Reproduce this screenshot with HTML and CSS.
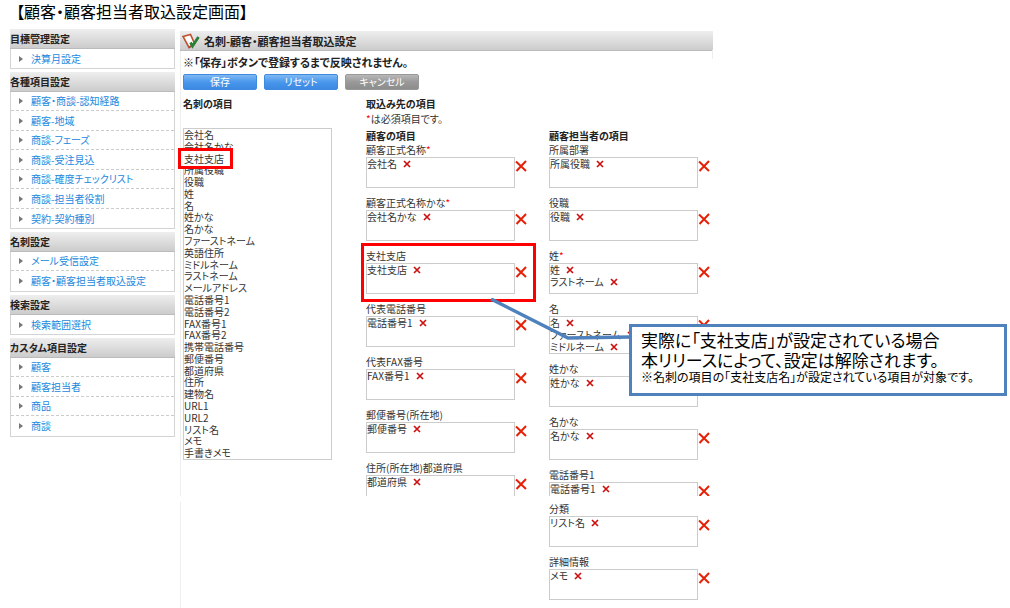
FILE: index.html
```html
<!DOCTYPE html>
<html lang="ja">
<head>
    <meta charset="UTF-8">
    <meta name="viewport" content="width=device-width, initial-scale=1.0">
    <title>顧客・顧客担当者取込設定画面</title>
    <link rel="stylesheet" href="styles.css">
</head>
<body>
    <svg class="icons">
        <symbol id="cross" viewBox="0 0 12 12">
            <path d="M1 1.5L11 11M11 1L1.5 11" fill="none" stroke="currentColor" stroke-width="2"/>
        </symbol>
        <symbol id="cross-small" viewBox="0 0 8 8">
            <path d="M1 1L7 7M7 1L1 7" fill="none" stroke="currentColor" stroke-width="1.7"/>
        </symbol>
    </svg>

    <h1>【顧客・顧客担当者取込設定画面】</h1>

    <div class="layout">
        <nav class="sidebar">
            <section>
                <h2 class="bar">目標管理設定</h2>
                <ul>
                    <li><a href="#">決算月設定</a></li>
                </ul>
            </section>
            <section>
                <h2 class="bar">各種項目設定</h2>
                <ul>
                    <li><a href="#">顧客・商談-認知経路</a></li>
                    <li><a href="#">顧客-地域</a></li>
                    <li><a href="#">商談-フェーズ</a></li>
                    <li><a href="#">商談-受注見込</a></li>
                    <li><a href="#">商談-確度チェックリスト</a></li>
                    <li><a href="#">商談-担当者役割</a></li>
                    <li><a href="#">契約-契約種別</a></li>
                </ul>
            </section>
            <section>
                <h2 class="bar">名刺設定</h2>
                <ul>
                    <li><a href="#">メール受信設定</a></li>
                    <li><a href="#">顧客・顧客担当者取込設定</a></li>
                </ul>
            </section>
            <section>
                <h2 class="bar">検索設定</h2>
                <ul>
                    <li><a href="#">検索範囲選択</a></li>
                </ul>
            </section>
            <section>
                <h2 class="bar">カスタム項目設定</h2>
                <ul>
                    <li><a href="#">顧客</a></li>
                    <li><a href="#">顧客担当者</a></li>
                    <li><a href="#">商品</a></li>
                    <li><a href="#">商談</a></li>
                </ul>
            </section>
        </nav>

        <main>
            <div class="panel">
                <h2 class="bar panel-title">
                    <svg class="panel-icon" viewBox="0 0 18 16">
                        <path d="M1 3.5L8.5 1.5L12.5 10.5L7 14.5Z" fill="#fff" stroke="#c0502f" stroke-width="1.6"/>
                        <path d="M7 15L12.5 11" fill="none" stroke="#555" stroke-width="1"/>
                        <path d="M8.5 9.5L10.5 13L16.5 4" fill="none" stroke="#2a7f35" stroke-width="2.8"/>
                    </svg>
                    名刺-顧客・顧客担当者取込設定
                </h2>
                <div class="panel-body">
                    <p class="notice">※「保存」ボタンで登録するまで反映されません。</p>
                    <div class="buttons">
                        <button type="button">保存</button>
                        <button type="button">リセット</button>
                        <button type="button" class="cancel">キャンセル</button>
                    </div>

                    <div class="columns">
                        <section class="source">
                            <h3>名刺の項目</h3>
                            <ul class="source-list">
                                <li>会社名</li>
                                <li>会社名かな</li>
                                <li class="marked"><span>支社支店</span></li>
                                <li>所属役職</li>
                                <li>役職</li>
                                <li>姓</li>
                                <li>名</li>
                                <li>姓かな</li>
                                <li>名かな</li>
                                <li>ファーストネーム</li>
                                <li>英語住所</li>
                                <li>ミドルネーム</li>
                                <li>ラストネーム</li>
                                <li>メールアドレス</li>
                                <li>電話番号1</li>
                                <li>電話番号2</li>
                                <li>FAX番号1</li>
                                <li>FAX番号2</li>
                                <li>携帯電話番号</li>
                                <li>郵便番号</li>
                                <li>都道府県</li>
                                <li>住所</li>
                                <li>建物名</li>
                                <li>URL1</li>
                                <li>URL2</li>
                                <li>リスト名</li>
                                <li>メモ</li>
                                <li>手書きメモ</li>
                            </ul>
                        </section>

                        <section class="target">
                            <h3>取込み先の項目</h3>
                            <p class="required-note"><em>*</em>は必須項目です。</p>
                            <div class="target-columns">
                                <div class="fields" id="customer">
                                    <h3>顧客の項目</h3>
                                </div>
                                <div class="fields" id="contact">
                                    <h3>顧客担当者の項目</h3>
                                </div>
                            </div>
                        </section>
                    </div>
                </div>
            </div>
            <div class="panel-rest">
                <div class="fields" id="contact-rest"></div>
            </div>
        </main>
    </div>

    <svg class="connector" viewBox="0 0 140 44">
        <path d="M1 1L78 40L140 39" fill="none" stroke="#4f81bd" stroke-width="3.5"/>
    </svg>
    <aside class="callout">
        <p>実際に「支社支店」が設定されている場合</p>
        <p>本リリースによって、設定は解除されます。</p>
        <p class="small">※名刺の項目の「支社支店名」が設定されている項目が対象です。</p>
    </aside>

    <script src="script.js"></script>
</body>
</html>
```
FILE: styles.css
```css
* {
    margin: 0;
    padding: 0;
    box-sizing: border-box;
}
body {
    position: relative;
    min-height: 100vh;
    background: white;
    color: #333;
    font-family: "Noto Sans CJK JP", sans-serif;
    font-feature-settings: "palt";
    font-size: 10px;
    line-height: 12px;
}
ul {
    list-style: none;
}
.icons {
    display: none;
}
h1 {
    height: 29px;
    padding-left: 16px;
    color: black;
    font-size: 16px;
    font-weight: normal;
    line-height: 22px;
}
.layout {
    display: flex;
    gap: 5px;
    padding-left: 10px;
}
.bar {
    height: 20px;
    background: linear-gradient(#eeeeee, #cccccc);
    border-bottom: 1px solid #bbb;
    color: #222;
    font-size: 10px;
    line-height: 20px;
}

/* sidebar */
.sidebar {
    flex: 0 0 165px;
}
.sidebar section {
    margin-bottom: 3px;
}
.sidebar ul {
    border: 1px solid #d4d4d4;
    border-top: none;
}
.sidebar li {
    display: flex;
    align-items: center;
    height: 19px;
    padding-left: 8px;
    border-bottom: 1px dashed #ccc;
}
.sidebar li:nth-child(even) {
    height: 20px;
}
.sidebar li:last-child {
    border-bottom: none;
}
.sidebar li::before {
    content: "";
    margin-right: 8px;
    border: solid transparent;
    border-width: 3px 0 3px 4px;
    border-left-color: #777;
}
.sidebar a {
    color: #2288dd;
    text-decoration: none;
}

/* main panel */
main {
    flex: 1;
    max-width: 533px;
    padding-top: 2px;
}
.panel {
    height: 465px;
    clip-path: inset(0 -10px);
}
.panel-title {
    position: relative;
    display: flex;
    align-items: center;
    gap: 4px;
    padding-left: 2px;
    font-size: 11px;
    line-height: 12px;
}
.panel-title::after {
    content: "";
    position: absolute;
    top: 100%;
    right: 0;
    height: 9px;
    border-right: 1px solid #eee;
}
.panel-icon {
    width: 18px;
    height: 16px;
}
.panel-body {
    padding: 5px 0 0 2px;
    border-left: 1px solid #eee;
}
.notice {
    margin-bottom: 6px;
    color: #222;
    font-size: 11px;
    font-weight: bold;
}
.buttons {
    display: flex;
    gap: 7px;
    margin-bottom: 8px;
}
button {
    width: 74px;
    height: 16px;
    background: linear-gradient(#7fb8f3, #4a98ec 50%, #3a88e2);
    border: 1px solid #3f8be0;
    border-radius: 2px;
    color: white;
    font: inherit;
    font-feature-settings: inherit;
    line-height: 12px;
    cursor: pointer;
}
button.cancel {
    background: linear-gradient(#b8b8b8, #999 50%, #8c8c8c);
    border-color: #999;
}
.columns {
    display: flex;
    gap: 34px;
}
h3 {
    color: #222;
    font-size: 10px;
    line-height: 12px;
}
.source {
    flex: 0 0 149px;
}
.source-list {
    display: grid;
    grid-auto-rows: 1fr;
    height: 332px;
    margin-top: 18px;
    border: 1px solid #ccc;
    line-height: 11px;
}
.marked {
    position: relative;
}
.marked span {
    position: absolute;
    top: -5px;
    left: -6px;
    width: 55px;
    padding: 2px 3px;
    background: white;
    border: 3px solid red;
}
.required-note {
    margin: 3px 0 5px;
}
em {
    color: red;
    font-style: normal;
}
.target-columns {
    display: flex;
    gap: 21px;
}
.fields {
    width: 162px;
}
.fields h3 {
    margin-bottom: 1px;
}
.field {
    position: relative;
    margin-bottom: 8px;
}
.field-label {
    height: 14px;
    padding-top: 1px;
}
.field-row {
    display: flex;
}
.field-box {
    width: 149px;
    min-height: 31px;
    border: 1px solid #ccc;
}
.field-box li {
    display: flex;
    align-items: center;
    gap: 6px;
    height: 12px;
}
.field .clear,
.field .remove {
    width: 12px;
    height: 12px;
    background: none;
    border: none;
    border-radius: 0;
}
.field .clear {
    margin-top: 3px;
    color: #e52207;
}
.field .remove {
    width: 8px;
    height: 8px;
    color: #cc1111;
}
.clear svg,
.remove svg {
    display: block;
    width: 100%;
    height: 100%;
}
.field.highlight::after {
    content: "";
    position: absolute;
    inset: -6px -8px -8px -5px;
    border: 3px solid red;
}
.panel-rest {
    display: flex;
    justify-content: flex-end;
    margin-top: 6px;
    padding-right: 2px;
    border-left: 1px solid #eee;
}

/* note over the page */
.connector {
    position: absolute;
    top: 298px;
    left: 490px;
    width: 140px;
    height: 44px;
}
.callout {
    position: absolute;
    top: 324px;
    left: 629px;
    width: 378px;
    padding: 3px 9px 9px;
    background: white;
    border: 3px solid #4f81bd;
    color: black;
    font-size: 17px;
    line-height: 20px;
    white-space: nowrap;
}
.callout .small {
    font-size: 12px;
    line-height: 14px;
}
```
FILE: script.js
```js
const customerFields = [
    { label: '顧客正式名称', required: true, items: ['会社名'] },
    { label: '顧客正式名称かな', required: true, items: ['会社名かな'] },
    { label: '支社支店', highlight: true, items: ['支社支店'] },
    { label: '代表電話番号', items: ['電話番号1'] },
    { label: '代表FAX番号', items: ['FAX番号1'] },
    { label: '郵便番号(所在地)', items: ['郵便番号'] },
    { label: '住所(所在地)都道府県', items: ['都道府県'] }
];
const contactFields = [
    { label: '所属部署', items: ['所属役職'] },
    { label: '役職', items: ['役職'] },
    { label: '姓', required: true, items: ['姓', 'ラストネーム'] },
    { label: '名', items: ['名', 'ファーストネーム', 'ミドルネーム'] },
    { label: '姓かな', items: ['姓かな'] },
    { label: '名かな', items: ['名かな'] },
    { label: '電話番号1', items: ['電話番号1'] }
];
const restFields = [
    { label: '分類', items: ['リスト名'] },
    { label: '詳細情報', items: ['メモ'] }
];

function renderFields(id, fields) {
    const html = fields.map(field => `
        <div class="field${field.highlight ? ' highlight' : ''}">
            <div class="field-label">${field.label}${field.required ? '<em>*</em>' : ''}</div>
            <div class="field-row">
                <ul class="field-box">
                    ${field.items.map(item => `<li>${item}<button type="button" class="remove" aria-label="${item}を外す"><svg><use href="#cross-small"/></svg></button></li>`).join('')}
                </ul>
                <button type="button" class="clear" aria-label="${field.label}をクリア"><svg><use href="#cross"/></svg></button>
            </div>
        </div>`).join('');
    document.getElementById(id).insertAdjacentHTML('beforeend', html);
}

renderFields('customer', customerFields);
renderFields('contact', contactFields);
renderFields('contact-rest', restFields);
```
